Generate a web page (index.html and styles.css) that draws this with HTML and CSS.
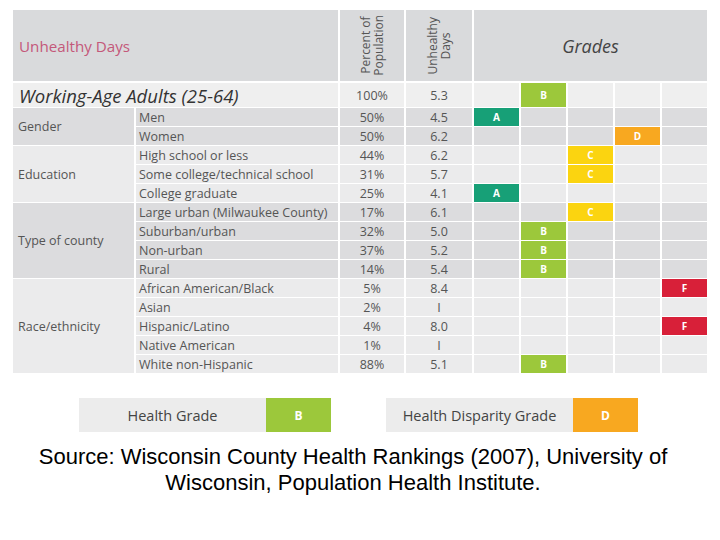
FILE: index.html
```html
<!DOCTYPE html>
<html>
<head>
<meta charset="utf-8">
<link rel="stylesheet" href="styles.css">
</head>
<body>
<div class="page">
  <div class="table">
    <div class="h title">Unhealthy Days</div>
    <div class="h vert"><span>Percent of<br>Population</span></div>
    <div class="h vert"><span>Unhealthy<br>Days</span></div>
    <div class="h grades">Grades</div>

    <div class="all label">Working-Age Adults (25-64)</div>
    <div class="all num">100%</div>
    <div class="all num">5.3</div>
    <div class="all g"></div><div class="all g b">B</div><div class="all g"></div><div class="all g"></div><div class="all g"></div>

    <div class="cat dark" style="grid-row: span 2">Gender</div>
    <div class="dark sub">Men</div><div class="dark num">50%</div><div class="dark num">4.5</div>
    <div class="dark g a">A</div><div class="dark g"></div><div class="dark g"></div><div class="dark g"></div><div class="dark g"></div>
    <div class="dark sub">Women</div><div class="dark num">50%</div><div class="dark num">6.2</div>
    <div class="dark g"></div><div class="dark g"></div><div class="dark g"></div><div class="dark g d">D</div><div class="dark g"></div>

    <div class="cat light" style="grid-row: span 3">Education</div>
    <div class="light sub">High school or less</div><div class="light num">44%</div><div class="light num">6.2</div>
    <div class="light g"></div><div class="light g"></div><div class="light g c">C</div><div class="light g"></div><div class="light g"></div>
    <div class="light sub">Some college/technical school</div><div class="light num">31%</div><div class="light num">5.7</div>
    <div class="light g"></div><div class="light g"></div><div class="light g c">C</div><div class="light g"></div><div class="light g"></div>
    <div class="light sub">College graduate</div><div class="light num">25%</div><div class="light num">4.1</div>
    <div class="light g a">A</div><div class="light g"></div><div class="light g"></div><div class="light g"></div><div class="light g"></div>

    <div class="cat dark" style="grid-row: span 4">Type of county</div>
    <div class="dark sub">Large urban (Milwaukee County)</div><div class="dark num">17%</div><div class="dark num">6.1</div>
    <div class="dark g"></div><div class="dark g"></div><div class="dark g c">C</div><div class="dark g"></div><div class="dark g"></div>
    <div class="dark sub">Suburban/urban</div><div class="dark num">32%</div><div class="dark num">5.0</div>
    <div class="dark g"></div><div class="dark g b">B</div><div class="dark g"></div><div class="dark g"></div><div class="dark g"></div>
    <div class="dark sub">Non-urban</div><div class="dark num">37%</div><div class="dark num">5.2</div>
    <div class="dark g"></div><div class="dark g b">B</div><div class="dark g"></div><div class="dark g"></div><div class="dark g"></div>
    <div class="dark sub">Rural</div><div class="dark num">14%</div><div class="dark num">5.4</div>
    <div class="dark g"></div><div class="dark g b">B</div><div class="dark g"></div><div class="dark g"></div><div class="dark g"></div>

    <div class="cat light" style="grid-row: span 5">Race/ethnicity</div>
    <div class="light sub">African American/Black</div><div class="light num">5%</div><div class="light num">8.4</div>
    <div class="light g"></div><div class="light g"></div><div class="light g"></div><div class="light g"></div><div class="light g f">F</div>
    <div class="light sub">Asian</div><div class="light num">2%</div><div class="light num">I</div>
    <div class="light g"></div><div class="light g"></div><div class="light g"></div><div class="light g"></div><div class="light g"></div>
    <div class="light sub">Hispanic/Latino</div><div class="light num">4%</div><div class="light num">8.0</div>
    <div class="light g"></div><div class="light g"></div><div class="light g"></div><div class="light g"></div><div class="light g f">F</div>
    <div class="light sub">Native American</div><div class="light num">1%</div><div class="light num">I</div>
    <div class="light g"></div><div class="light g"></div><div class="light g"></div><div class="light g"></div><div class="light g"></div>
    <div class="light sub">White non-Hispanic</div><div class="light num">88%</div><div class="light num">5.1</div>
    <div class="light g"></div><div class="light g b">B</div><div class="light g"></div><div class="light g"></div><div class="light g"></div>
  </div>

  <div class="legend">
    <div class="key"><span class="key-label">Health Grade</span><span class="key-grade b">B</span></div>
    <div class="key"><span class="key-label">Health Disparity Grade</span><span class="key-grade d">D</span></div>
  </div>

  <p class="source">Source: Wisconsin County Health Rankings (2007), University of<br>Wisconsin, Population Health Institute.</p>
</div>
</body>
</html>
```

FILE: styles.css
```css
html, body {
  margin: 0;
  padding: 0;
  background: #ffffff;
}

.page {
  width: 720px;
  height: 540px;
  padding: 10px 0 0 13px;
  box-sizing: border-box;
  font-family: "Open Sans", "Noto Sans", sans-serif;
  color: #555;
}

.table {
  display: grid;
  grid-template-columns: 121px 202px 64px 66px repeat(5, 45px);
  grid-template-rows: 72px 24px repeat(14, 18px);
  column-gap: 2px;
  row-gap: 1px;
  width: 694px;
  font-size: 12.5px;
}

.h {
  background: #d9dadc;
}

.title {
  grid-column: span 2;
  display: flex;
  align-items: center;
  padding-left: 6px;
  font-size: 15.2px;
  color: #c4587a;
  margin-bottom: 1px;
}

.vert {
  display: flex;
  align-items: center;
  justify-content: center;
  margin-bottom: 1px;
}

.vert span {
  writing-mode: vertical-rl;
  transform: rotate(180deg);
  text-align: center;
  line-height: 13px;
  font-size: 12px;
  color: #555;
}

.grades {
  grid-column: span 5;
  display: flex;
  align-items: center;
  justify-content: center;
  font-style: italic;
  font-size: 18px;
  color: #444;
  margin-bottom: 1px;
}

.all {
  background: #efefef;
}

.label {
  grid-column: span 2;
  display: flex;
  align-items: center;
  padding-left: 6px;
  font-style: italic;
  font-size: 18.5px;
  color: #333;
}

.dark {
  background: #dcdcde;
}

.light {
  background: #ebebec;
}

.cat {
  display: flex;
  align-items: center;
  padding-left: 5px;
}

.sub {
  display: flex;
  align-items: center;
  padding-left: 3px;
  white-space: nowrap;
}

.num {
  display: flex;
  align-items: center;
  justify-content: center;
}

.g {
  display: flex;
  align-items: center;
  justify-content: center;
  color: #fff;
  font-weight: 700;
  font-size: 10px;
}

.a { background: #17a077; }
.b { background: #9cc83b; }
.c { background: #fbd410; }
.d { background: #f8a820; }
.f { background: #d82039; }

.legend {
  display: flex;
  justify-content: center;
  gap: 55px;
  margin-top: 25px;
  margin-left: -16px;
}

.key {
  display: flex;
  height: 34px;
}

.key-label {
  width: 187px;
  background: #ececec;
  display: flex;
  align-items: center;
  justify-content: center;
  font-size: 14.5px;
  color: #444;
}

.key-grade {
  width: 65px;
  display: flex;
  align-items: center;
  justify-content: center;
  color: #fff;
  font-weight: 700;
  font-size: 12px;
}

.source {
  margin: 12px 0 0 -13px;
  padding-right: 14px;
  text-align: center;
  font-family: "Liberation Sans", Arial, sans-serif;
  font-size: 22px;
  line-height: 26px;
  color: #000;
}
```
